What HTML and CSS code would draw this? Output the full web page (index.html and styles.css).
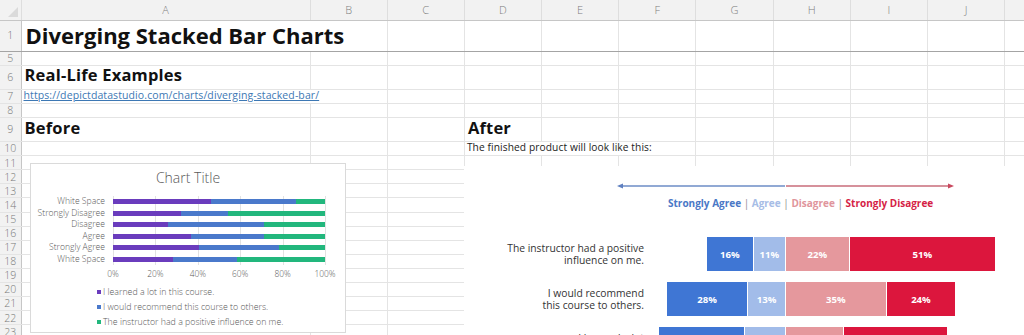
FILE: index.html
```html
<!DOCTYPE html>
<html lang="en">
<head>
    <meta charset="UTF-8" />
    <title>Diverging Stacked Bar Charts</title>
    <link rel="stylesheet" href="styles.css">
</head>
<body>
<div class="sheet-wrap">
    <table class="sheet">
        <colgroup>
            <col class="c-hd"><col class="c-a">
            <col class="c"><col class="c"><col class="c"><col class="c"><col class="c">
            <col class="c"><col class="c"><col class="c"><col class="c"><col class="c">
        </colgroup>
        <thead>
            <tr><th class="corner"></th><th>A</th><th>B</th><th>C</th><th>D</th><th>E</th><th>F</th><th>G</th><th>H</th><th>I</th><th>J</th><th></th></tr>
        </thead>
        <tbody>
            <tr class="r-title"><th>1</th><td colspan="2"><span class="title">Diverging Stacked Bar Charts</span></td><td></td><td></td><td></td><td></td><td></td><td></td><td></td><td></td><td></td></tr>
            <tr class="r-sm"><th>5</th><td></td><td></td><td></td><td></td><td></td><td></td><td></td><td></td><td></td><td></td><td></td></tr>
            <tr class="r-head"><th>6</th><td><span class="heading">Real-Life Examples</span></td><td></td><td></td><td></td><td></td><td></td><td></td><td></td><td></td><td></td><td></td></tr>
            <tr class="r-sm"><th>7</th><td colspan="2"><a class="link" href="#">https://depictdatastudio.com/charts/diverging-stacked-bar/</a></td><td></td><td></td><td></td><td></td><td></td><td></td><td></td><td></td><td></td></tr>
            <tr class="r-sm"><th>8</th><td></td><td></td><td></td><td></td><td></td><td></td><td></td><td></td><td></td><td></td><td></td></tr>
            <tr class="r-head"><th>9</th><td><span class="heading">Before</span></td><td></td><td></td><td><span class="heading">After</span></td><td></td><td></td><td></td><td></td><td></td><td></td><td></td></tr>
            <tr class="r-sm"><th>10</th><td></td><td></td><td></td><td colspan="3"><span class="note">The finished product will look like this:</span></td><td></td><td></td><td></td><td></td><td></td></tr>
            <tr class="r-row"><th>11</th><td></td><td></td><td></td><td></td><td></td><td></td><td></td><td></td><td></td><td></td><td></td></tr>
            <tr class="r-row"><th>12</th><td></td><td></td><td></td><td></td><td></td><td></td><td></td><td></td><td></td><td></td><td></td></tr>
            <tr class="r-row"><th>13</th><td></td><td></td><td></td><td></td><td></td><td></td><td></td><td></td><td></td><td></td><td></td></tr>
            <tr class="r-row"><th>14</th><td></td><td></td><td></td><td></td><td></td><td></td><td></td><td></td><td></td><td></td><td></td></tr>
            <tr class="r-row"><th>15</th><td></td><td></td><td></td><td></td><td></td><td></td><td></td><td></td><td></td><td></td><td></td></tr>
            <tr class="r-row"><th>16</th><td></td><td></td><td></td><td></td><td></td><td></td><td></td><td></td><td></td><td></td><td></td></tr>
            <tr class="r-row"><th>17</th><td></td><td></td><td></td><td></td><td></td><td></td><td></td><td></td><td></td><td></td><td></td></tr>
            <tr class="r-row"><th>18</th><td></td><td></td><td></td><td></td><td></td><td></td><td></td><td></td><td></td><td></td><td></td></tr>
            <tr class="r-row"><th>19</th><td></td><td></td><td></td><td></td><td></td><td></td><td></td><td></td><td></td><td></td><td></td></tr>
            <tr class="r-row"><th>20</th><td></td><td></td><td></td><td></td><td></td><td></td><td></td><td></td><td></td><td></td><td></td></tr>
            <tr class="r-row"><th>21</th><td></td><td></td><td></td><td></td><td></td><td></td><td></td><td></td><td></td><td></td><td></td></tr>
            <tr class="r-row"><th>22</th><td></td><td></td><td></td><td></td><td></td><td></td><td></td><td></td><td></td><td></td><td></td></tr>
            <tr class="r-row"><th>23</th><td></td><td></td><td></td><td></td><td></td><td></td><td></td><td></td><td></td><td></td><td></td></tr>
        </tbody>
    </table>

    <!-- "Before": default Excel chart floating over the cells -->
    <div class="xl-chart">
        <div class="xl-title">Chart Title</div>
        <div class="xl-plot">
            <div class="xl-cats">
                <div>White Space</div>
                <div>Strongly Disagree</div>
                <div>Disagree</div>
                <div>Agree</div>
                <div>Strongly Agree</div>
                <div>White Space</div>
            </div>
            <div class="xl-bars">
                <div class="xl-row"><div class="xl-stack"><i class="s1" style="width:46.2%"></i><i class="s2" style="width:40.1%"></i><i class="s3" style="width:13.7%"></i></div></div>
                <div class="xl-row"><div class="xl-stack"><i class="s1" style="width:32.2%"></i><i class="s2" style="width:22%"></i><i class="s3" style="width:45.8%"></i></div></div>
                <div class="xl-row"><div class="xl-stack"><i class="s1" style="width:25.9%"></i><i class="s2" style="width:45.5%"></i><i class="s3" style="width:28.6%"></i></div></div>
                <div class="xl-row"><div class="xl-stack"><i class="s1" style="width:36.9%"></i><i class="s2" style="width:34.5%"></i><i class="s3" style="width:28.6%"></i></div></div>
                <div class="xl-row"><div class="xl-stack"><i class="s1" style="width:40.5%"></i><i class="s2" style="width:38%"></i><i class="s3" style="width:21.5%"></i></div></div>
                <div class="xl-row"><div class="xl-stack"><i class="s1" style="width:28.1%"></i><i class="s2" style="width:30.5%"></i><i class="s3" style="width:41.4%"></i></div></div>
            </div>
        </div>
        <div class="xl-axis">
            <span>0%</span><span>20%</span><span>40%</span><span>60%</span><span>80%</span><span>100%</span>
        </div>
        <ul class="xl-legend">
            <li><i class="s1"></i>I learned a lot in this course.</li>
            <li><i class="s2"></i>I would recommend this course to others.</li>
            <li><i class="s3"></i>The instructor had a positive influence on me.</li>
        </ul>
    </div>

    <!-- "After": finished diverging chart picture -->
    <div class="after-img">
        <svg class="arrow" width="338" height="8" viewBox="0 0 338 8">
            <line x1="4" y1="4" x2="168" y2="4" stroke="#6c8cc6" stroke-width="1.6"/>
            <polygon points="0,4 6,1.5 6,6.5" fill="#5f80c0"/>
            <line x1="169" y1="4" x2="333" y2="4" stroke="#c86d7a" stroke-width="1.6"/>
            <polygon points="337,4 331,1.5 331,6.5" fill="#c9485e"/>
        </svg>
        <p class="key">
            <span class="k-sa">Strongly Agree</span> <span class="sep">|</span>
            <span class="k-a">Agree</span> <span class="sep">|</span>
            <span class="k-d">Disagree</span> <span class="sep">|</span>
            <span class="k-sd">Strongly Disagree</span>
        </p>

        <div class="drow">
            <div class="dlabel">The instructor had a positive<br>influence on me.</div>
            <div class="dneg"><b class="sa" style="--v:16">16%</b><b class="a" style="--v:11">11%</b></div>
            <div class="dpos"><b class="d" style="--v:22">22%</b><b class="sd" style="--v:51">51%</b></div>
        </div>
        <div class="drow">
            <div class="dlabel">I would recommend<br>this course to others.</div>
            <div class="dneg"><b class="sa" style="--v:28">28%</b><b class="a" style="--v:13">13%</b></div>
            <div class="dpos"><b class="d" style="--v:35">35%</b><b class="sd" style="--v:24">24%</b></div>
        </div>
        <div class="drow">
            <div class="dlabel">I learned a lot<br>in this course.</div>
            <div class="dneg"><b class="sa" style="--v:30">30%</b><b class="a" style="--v:14">14%</b></div>
            <div class="dpos"><b class="d" style="--v:20">20%</b><b class="sd" style="--v:36">36%</b></div>
        </div>
    </div>
</div>
</body>
</html>
```

FILE: styles.css
```css
* {
    box-sizing: border-box;
}
html, body {
    margin: 0;
    background: #fff;
    overflow: hidden;
}
body {
    font-family: "Open Sans", "Liberation Sans", sans-serif;
    color: #1b1b1b;
}
.sheet-wrap {
    position: relative;
    width: 1024px;
    height: 335px;
    overflow: hidden;
}

/* grid */
.sheet {
    border-collapse: collapse;
    table-layout: fixed;
    width: 1082px;
}
col.c-hd { width: 21px; }
col.c-a { width: 289px; }
col.c { width: 77.2px; }
.sheet td,
.sheet th {
    padding: 0;
    border: 1px solid #e4e4e4;
    white-space: nowrap;
    overflow: visible;
    vertical-align: bottom;
    line-height: 1;
}
.sheet thead th {
    height: 20px;
    background: #f2f2f2;
    color: #7d7d7d;
    font-size: 11px;
    font-weight: 300;
    vertical-align: middle;
    border-top: none;
    border-color: #dedede;
    border-bottom-color: #c6c6c6;
}
.sheet thead th.corner {
    position: relative;
    border-left: none;
}
.sheet thead th.corner::after {
    content: "";
    position: absolute;
    right: 3px;
    bottom: 3px;
    border-left: 10px solid transparent;
    border-bottom: 10px solid #dadada;
}
.sheet tbody th {
    background: #f2f2f2;
    color: #7a7a7a;
    font-size: 10.5px;
    font-weight: 300;
    text-align: center;
    vertical-align: middle;
    border-left: none;
    border-right-color: #c6c6c6;
}
.r-title { height: 31px; }
.r-title td,
.r-title th {
    border-bottom: 1px solid #a4a4a4;
}
.r-head { height: 24px; }
.r-sm { height: 14px; }
.r-row { height: 14.1px; }

.title {
    display: block;
    padding: 0 0 5px 4px;
    font-size: 22px;
    font-weight: 700;
    color: #111;
}
.heading {
    display: block;
    padding: 0 0 5px 3px;
    font-size: 16.5px;
    font-weight: 700;
    letter-spacing: 0.2px;
    color: #111;
}
.link {
    display: block;
    padding: 0 0 3px 2px;
    font-size: 10.5px;
    letter-spacing: 0.1px;
    color: #3d78b4;
}
.note {
    display: block;
    padding: 0 0 3px 2px;
    font-size: 10.2px;
    letter-spacing: 0.1px;
    color: #222;
}

/* before: excel chart */
.xl-chart {
    position: absolute;
    left: 30px;
    top: 163px;
    width: 316px;
    height: 170px;
    background: #fff;
    border: 1px solid #dadada;
    color: #595959;
}
.xl-title {
    padding-top: 5px;
    font-size: 14px;
    font-weight: 300;
    line-height: 18px;
    text-align: center;
}
.xl-plot {
    display: flex;
    margin-top: 9px;
}
.xl-cats {
    width: 74px;
    font-size: 8.6px;
    font-weight: 300;
    text-align: right;
    white-space: nowrap;
}
.xl-cats div {
    height: 11.5px;
    line-height: 11.5px;
}
.xl-bars {
    width: 213px;
    margin-left: 8px;
    background: repeating-linear-gradient(90deg, #e2e2e2 0 1px, transparent 1px 42.4px);
}
.xl-row {
    height: 11.5px;
    display: flex;
    align-items: center;
}
.xl-stack {
    display: flex;
    width: 212px;
    height: 5px;
}
.s1 { background: #6a3cbd; }
.s2 { background: #4a79cb; }
.s3 { background: #22b77d; }
.xl-axis {
    display: flex;
    justify-content: space-between;
    width: 212px;
    margin: 4px 0 0 82px;
    font-size: 8.4px;
    font-weight: 300;
    line-height: 10px;
}
.xl-axis span {
    width: 0;
    display: flex;
    justify-content: center;
}
.xl-legend {
    list-style: none;
    margin: 6px 0 0 66px;
    padding: 0;
    font-size: 8.8px;
    font-weight: 300;
}
.xl-legend li {
    display: flex;
    align-items: center;
    gap: 2px;
    height: 14.8px;
}
.xl-legend i {
    width: 4px;
    height: 4px;
}

/* after: finished chart picture */
.after-img {
    position: absolute;
    left: 464px;
    top: 166px;
    width: 580px;
    height: 180px;
    background: #fff;
}
.arrow {
    display: block;
    margin: 16px 0 0 153px;
}
.key {
    margin: 7px 0 0 204px;
    font-size: 10px;
    font-weight: 700;
    line-height: 12px;
    white-space: nowrap;
}
.key .sep { font-weight: 400; color: #8a8a8a; }
.k-sa { color: #4a78c6; }
.k-a { color: #a7bde6; }
.k-d { color: #df959c; }
.k-sd { color: #d51f47; }
.drow {
    display: grid;
    grid-template-columns: 180px 141px 1fr;
    height: 34px;
    margin-bottom: 11px;
    align-items: center;
}
.drow:first-of-type {
    margin-top: 28px;
}
.dlabel {
    font-size: 10.3px;
    line-height: 12px;
    color: #333;
    text-align: right;
    white-space: nowrap;
}
.dneg,
.dpos {
    display: flex;
    gap: 1px;
    height: 100%;
}
.dneg { justify-content: flex-end; }
.dpos { padding-left: 1px; }
.drow b {
    width: calc(var(--v) * 2.85px);
    display: flex;
    align-items: center;
    justify-content: center;
    color: #fff;
    font-size: 9.6px;
    font-weight: 700;
}
.sa { background: #3f76d4; }
.a { background: #a2bce9; }
.d { background: #e5989d; }
.sd { background: #dc163d; }
```
